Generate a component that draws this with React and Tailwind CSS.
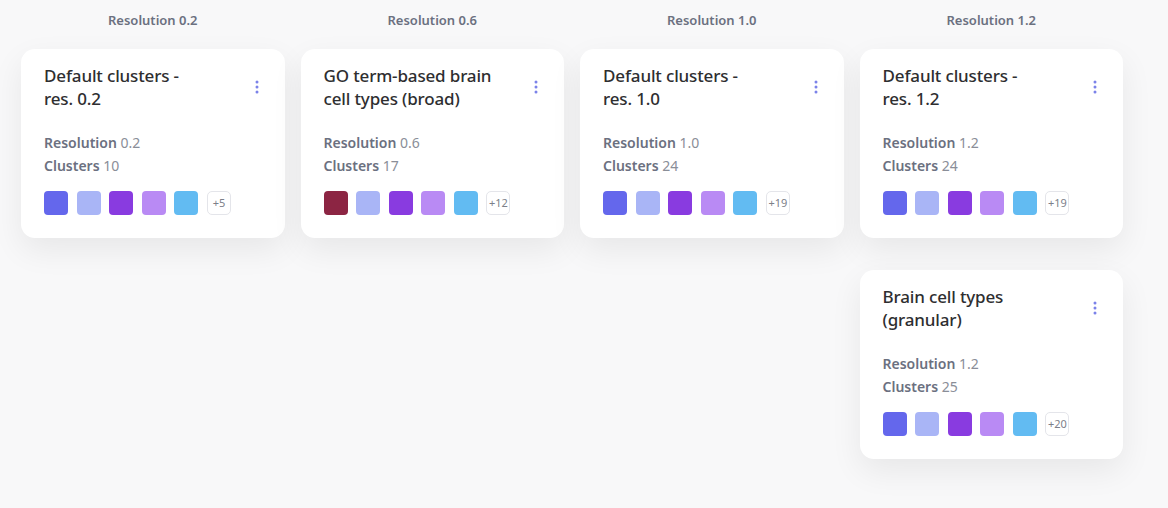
const columns = [
  {
    label: "Resolution 0.2",
    cards: [
      {
        title: "Default clusters - res.\u00a00.2",
        resolution: "0.2",
        clusters: 10,
        colors: ["#6467ec", "#a9b5f6", "#893be0", "#b98af4", "#62bbf2"],
        more: 5,
      },
    ],
  },
  {
    label: "Resolution 0.6",
    cards: [
      {
        title: "GO term-based brain cell types (broad)",
        resolution: "0.6",
        clusters: 17,
        colors: ["#8c2543", "#a9b5f6", "#893be0", "#b98af4", "#62bbf2"],
        more: 12,
      },
    ],
  },
  {
    label: "Resolution 1.0",
    cards: [
      {
        title: "Default clusters - res.\u00a01.0",
        resolution: "1.0",
        clusters: 24,
        colors: ["#6467ec", "#a9b5f6", "#893be0", "#b98af4", "#62bbf2"],
        more: 19,
      },
    ],
  },
  {
    label: "Resolution 1.2",
    cards: [
      {
        title: "Default clusters - res.\u00a01.2",
        resolution: "1.2",
        clusters: 24,
        colors: ["#6467ec", "#a9b5f6", "#893be0", "#b98af4", "#62bbf2"],
        more: 19,
      },
      {
        title: "Brain cell types (granular)",
        resolution: "1.2",
        clusters: 25,
        colors: ["#6467ec", "#a9b5f6", "#893be0", "#b98af4", "#62bbf2"],
        more: 20,
      },
    ],
  },
];

function DotsButton() {
  return (
    <button type="button" className="w-6 h-6 flex items-center justify-center shrink-0 mt-[11px]">
      <svg width="4" height="14" viewBox="0 0 4 14" fill="#7b82e9">
        <circle cx="2" cy="2" r="1.5" />
        <circle cx="2" cy="7" r="1.5" />
        <circle cx="2" cy="12" r="1.5" />
      </svg>
    </button>
  );
}

function ClusterCard({ card }) {
  return (
    <div className="bg-white rounded-[14px] pl-[23px] pr-4 pt-[15px] pb-[23px] shadow-[0_12px_32px_rgba(0,0,0,0.07)]">
      <div className="flex items-start justify-between">
        <h3 className="w-[172px] text-[17px] leading-[23px] font-medium tracking-[-0.15px] text-[#2e2e30]">
          {card.title}
        </h3>
        <DotsButton />
      </div>

      <div className="mt-[21px] text-[14px] leading-[23px]">
        <p>
          <span className="font-semibold text-[#6b7080]">Resolution</span>{" "}
          <span className="text-[#8a8e98]">{card.resolution}</span>
        </p>
        <p>
          <span className="font-semibold text-[#6b7080]">Clusters</span>{" "}
          <span className="text-[#8a8e98]">{card.clusters}</span>
        </p>
      </div>

      <div className="mt-[14px] flex items-center gap-[8.6px]">
        {card.colors.map((c, i) => (
          <div key={i} className="w-6 h-6 rounded-[4px]" style={{ backgroundColor: c }} />
        ))}
        <div className="min-w-6 h-6 px-[1px] rounded-[5px] border-[1.5px] border-[#e4e5ea] flex items-center justify-center text-[11px] text-[#7c8089]">
          +{card.more}
        </div>
      </div>
    </div>
  );
}

export default function App() {
  return (
    <div
      className="w-[1168px] h-[508px] bg-[#f8f8f9] overflow-hidden"
      style={{ fontFamily: '"Noto Sans", "Open Sans", sans-serif' }}
    >
      <div className="w-[1102px] ml-[21px] grid grid-cols-4 gap-x-4 items-start">
        {columns.map((col) => (
          <div key={col.label} className="flex flex-col">
            <div className="h-[49px] pt-[11px] text-center text-[13px] leading-[18px] font-semibold text-[#6b7080]">
              {col.label}
            </div>
            <div className="flex flex-col gap-8">
              {col.cards.map((card) => (
                <ClusterCard key={card.title} card={card} />
              ))}
            </div>
          </div>
        ))}
      </div>
    </div>
  );
}
